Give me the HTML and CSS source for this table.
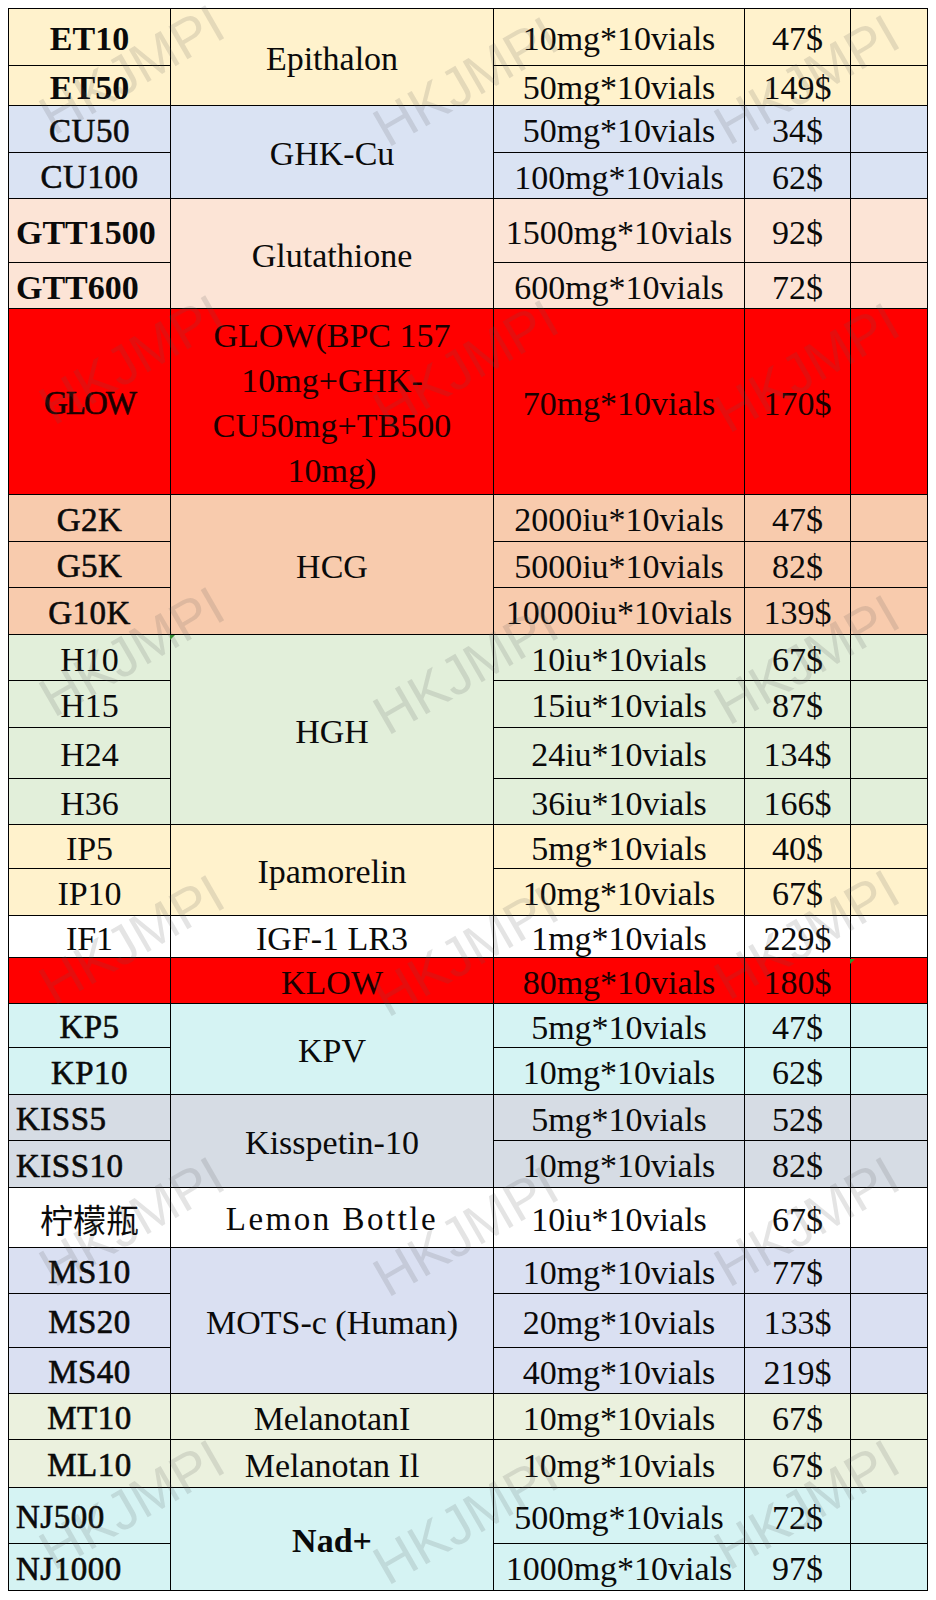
FILE: index.html
```html
<!DOCTYPE html>
<html>
<head>
<meta charset="utf-8">
<link rel="stylesheet" href="styles.css">
</head>
<body>
<div class="sheet">
  <div class="table">
    <div class="c yel code b">ET10</div><div class="c yel name s2">Epithalon</div><div class="c yel">10mg*10vials</div><div class="c yel">47$</div><div class="c yel"></div>
    <div class="c yel code b">ET50</div><div class="c yel">50mg*10vials</div><div class="c yel">149$</div><div class="c yel"></div>

    <div class="c blu code m">CU50</div><div class="c blu name s2">GHK-Cu</div><div class="c blu">50mg*10vials</div><div class="c blu">34$</div><div class="c blu"></div>
    <div class="c blu code m">CU100</div><div class="c blu">100mg*10vials</div><div class="c blu">62$</div><div class="c blu"></div>

    <div class="c pch code b left">GTT1500</div><div class="c pch name s2">Glutathione</div><div class="c pch">1500mg*10vials</div><div class="c pch">92$</div><div class="c pch"></div>
    <div class="c pch code b left">GTT600</div><div class="c pch">600mg*10vials</div><div class="c pch">72$</div><div class="c pch"></div>

    <div class="c red code m narrow">GLOW</div><div class="c red name multi">GLOW(BPC 157<br>10mg+GHK-<br>CU50mg+TB500<br>10mg)</div><div class="c red">70mg*10vials</div><div class="c red">170$</div><div class="c red"></div>

    <div class="c hcg code m">G2K</div><div class="c hcg name s3">HCG</div><div class="c hcg">2000iu*10vials</div><div class="c hcg">47$</div><div class="c hcg"></div>
    <div class="c hcg code m">G5K</div><div class="c hcg">5000iu*10vials</div><div class="c hcg">82$</div><div class="c hcg"></div>
    <div class="c hcg code m">G10K</div><div class="c hcg">10000iu*10vials</div><div class="c hcg">139$</div><div class="c hcg"></div>

    <div class="c grn code">H10</div><div class="c grn name s4">HGH</div><div class="c grn">10iu*10vials</div><div class="c grn">67$</div><div class="c grn"></div>
    <div class="c grn code">H15</div><div class="c grn">15iu*10vials</div><div class="c grn">87$</div><div class="c grn"></div>
    <div class="c grn code">H24</div><div class="c grn">24iu*10vials</div><div class="c grn">134$</div><div class="c grn"></div>
    <div class="c grn code">H36</div><div class="c grn">36iu*10vials</div><div class="c grn">166$</div><div class="c grn"></div>

    <div class="c yel code">IP5</div><div class="c yel name s2">Ipamorelin</div><div class="c yel">5mg*10vials</div><div class="c yel">40$</div><div class="c yel"></div>
    <div class="c yel code">IP10</div><div class="c yel">10mg*10vials</div><div class="c yel">67$</div><div class="c yel"></div>

    <div class="c wht code">IF1</div><div class="c wht name">IGF-1 LR3</div><div class="c wht">1mg*10vials</div><div class="c wht">229$</div><div class="c wht"></div>

    <div class="c red code"></div><div class="c red name">KLOW</div><div class="c red">80mg*10vials</div><div class="c red">180$</div><div class="c red"></div>

    <div class="c cya code m">KP5</div><div class="c cya name s2">KPV</div><div class="c cya">5mg*10vials</div><div class="c cya">47$</div><div class="c cya"></div>
    <div class="c cya code m">KP10</div><div class="c cya">10mg*10vials</div><div class="c cya">62$</div><div class="c cya"></div>

    <div class="c gry code m left">KISS5</div><div class="c gry name s2">Kisspetin-10</div><div class="c gry">5mg*10vials</div><div class="c gry">52$</div><div class="c gry"></div>
    <div class="c gry code m left">KISS10</div><div class="c gry">10mg*10vials</div><div class="c gry">82$</div><div class="c gry"></div>

    <div class="c wht code cjk">柠檬瓶</div><div class="c wht name spaced">Lemon Bottle</div><div class="c wht">10iu*10vials</div><div class="c wht">67$</div><div class="c wht"></div>

    <div class="c lav code m">MS10</div><div class="c lav name s3">MOTS-c (Human)</div><div class="c lav">10mg*10vials</div><div class="c lav">77$</div><div class="c lav"></div>
    <div class="c lav code m">MS20</div><div class="c lav">20mg*10vials</div><div class="c lav">133$</div><div class="c lav"></div>
    <div class="c lav code m">MS40</div><div class="c lav">40mg*10vials</div><div class="c lav">219$</div><div class="c lav"></div>

    <div class="c lim code m">MT10</div><div class="c lim name">MelanotanI</div><div class="c lim">10mg*10vials</div><div class="c lim">67$</div><div class="c lim"></div>
    <div class="c lim code m">ML10</div><div class="c lim name">Melanotan Il</div><div class="c lim">10mg*10vials</div><div class="c lim">67$</div><div class="c lim"></div>

    <div class="c cya code m left">NJ500</div><div class="c cya name s2 b">Nad+</div><div class="c cya">500mg*10vials</div><div class="c cya">72$</div><div class="c cya"></div>
    <div class="c cya code m left">NJ1000</div><div class="c cya">1000mg*10vials</div><div class="c cya">97$</div><div class="c cya"></div>
  </div>

  <div class="marks">
    <span class="tick" style="left:170px;top:635px"></span>
    <span class="tick" style="left:850px;top:959px"></span>
    <span class="mark" style="left:132px;top:70px">HKJMPI</span>
    <span class="mark" style="left:466px;top:82px">HKJMPI</span>
    <span class="mark" style="left:807px;top:80px">HKJMPI</span>
    <span class="mark" style="left:132px;top:360px">HKJMPI</span>
    <span class="mark" style="left:466px;top:365px">HKJMPI</span>
    <span class="mark" style="left:807px;top:368px">HKJMPI</span>
    <span class="mark" style="left:132px;top:652px">HKJMPI</span>
    <span class="mark" style="left:466px;top:670px">HKJMPI</span>
    <span class="mark" style="left:807px;top:660px">HKJMPI</span>
    <span class="mark" style="left:132px;top:940px">HKJMPI</span>
    <span class="mark" style="left:466px;top:952px">HKJMPI</span>
    <span class="mark" style="left:807px;top:935px">HKJMPI</span>
    <span class="mark" style="left:132px;top:1222px">HKJMPI</span>
    <span class="mark" style="left:466px;top:1232px">HKJMPI</span>
    <span class="mark" style="left:807px;top:1222px">HKJMPI</span>
    <span class="mark" style="left:132px;top:1505px">HKJMPI</span>
    <span class="mark" style="left:466px;top:1520px">HKJMPI</span>
    <span class="mark" style="left:807px;top:1505px">HKJMPI</span>
  </div>
</div>
</body>
</html>
```

FILE: styles.css
```css
html, body {
  margin: 0;
  padding: 0;
  background: #ffffff;
}

.sheet {
  position: relative;
  width: 936px;
  height: 1600px;
  padding: 8px 0 0 8px;
  box-sizing: border-box;
  overflow: hidden;
}

.table {
  display: inline-grid;
  grid-template-columns: 161px 322px 250px 105px 76px;
  grid-template-rows: 56px 39px 46px 45px 63px 45px 185px 46px 45px 46px 45px 46px 50px 45px 43px 46px 41px 45px 43px 46px 45px 46px 59px 45px 53px 45px 45px 47px 55px 46px;
  gap: 1px;
  background: #000;
  border: 1px solid #000;
  font-family: "Liberation Serif", "Times New Roman", serif;
  font-size: 34px;
  color: #0a0a0a;
}

.c {
  display: flex;
  align-items: center;
  justify-content: center;
  text-align: center;
  white-space: nowrap;
  line-height: 1;
  padding-top: 4px;
  box-sizing: border-box;
  overflow: hidden;
}

.b { font-weight: bold; }

.m {
  font-size: 33px;
  -webkit-text-stroke: 0.6px #0a0a0a;
  letter-spacing: 0.5px;
}

.narrow {
  letter-spacing: -2px;
}

.left {
  justify-content: flex-start;
  padding-left: 7px;
}

.cjk {
  font-family: "Noto Sans CJK SC", sans-serif;
  font-size: 33px;
  font-weight: normal;
}

.spaced {
  font-size: 33px;
  letter-spacing: 2.5px;
}

.s2 { grid-row: span 2; }
.s3 { grid-row: span 3; }
.s4 { grid-row: span 4; }

.multi {
  white-space: normal;
  line-height: 45px;
  padding-top: 2px;
}

.yel { background: #fff2cc; }
.blu { background: #dae3f3; }
.pch { background: #fce4d6; }
.red { background: #ff0000; color: #1a0000; }
.red.m { -webkit-text-stroke-color: #1a0000; }
.hcg { background: #f8cbad; }
.grn { background: #e2efda; }
.wht { background: #ffffff; }
.cya { background: #d5f3f3; }
.gry { background: #d6dce4; }
.lav { background: #dae0f2; }
.lim { background: #ebf1de; }

.marks {
  position: absolute;
  inset: 0;
  pointer-events: none;
}

.mark {
  position: absolute;
  transform: translate(-50%, -50%) rotate(-30deg);
  font-family: "Liberation Sans", Arial, sans-serif;
  font-size: 55px;
  line-height: 0.75;
  color: rgba(90, 90, 90, 0.16);
  white-space: nowrap;
}

.tick {
  position: absolute;
  width: 0;
  height: 0;
  border-top: 5px solid #2e9b2e;
  border-right: 5px solid transparent;
}
```
